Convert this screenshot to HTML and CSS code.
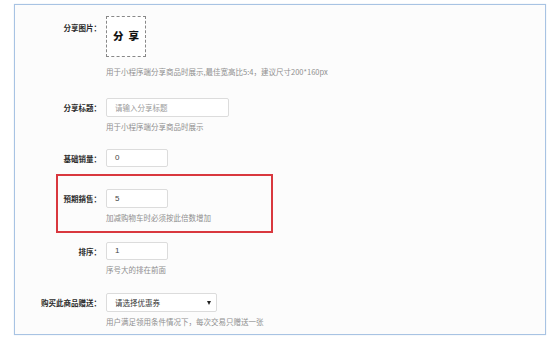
FILE: index.html
```html
<!DOCTYPE html>
<html lang="zh">
<head>
<meta charset="utf-8">
<link rel="stylesheet" href="styles.css">
</head>
<body>
<div class="frame">
  <div class="row r-img">
    <div class="label">分享图片：</div>
    <div class="field">
      <div class="imgbox"><span>分享</span></div>
      <div class="hint">用于小程序端分享商品时展示,最佳宽高比5:4，建议尺寸200*160px</div>
    </div>
  </div>
  <div class="row r-title">
    <div class="label">分享标题：</div>
    <div class="field">
      <div class="input wide placeholder">请输入分享标题</div>
      <div class="hint">用于小程序端分享商品时展示</div>
    </div>
  </div>
  <div class="row r-base">
    <div class="label">基础销量：</div>
    <div class="field">
      <div class="input">0</div>
    </div>
  </div>
  <div class="row highlight">
    <div class="label">預期銷售：</div>
    <div class="field">
      <div class="input">5</div>
      <div class="hint">加减购物车时必须按此倍数增加</div>
    </div>
  </div>
  <div class="row r-sort">
    <div class="label">排序：</div>
    <div class="field">
      <div class="input">1</div>
      <div class="hint">序号大的排在前面</div>
    </div>
  </div>
  <div class="row r-gift">
    <div class="label">购买此商品赠送：</div>
    <div class="field">
      <div class="input select"><span>请选择优惠券</span><span class="arrow"></span></div>
      <div class="hint">用户满足领用条件情况下，每次交易只赠送一张</div>
    </div>
  </div>
</div>
</body>
</html>
```
FILE: styles.css
```css
html, body {
  margin: 0;
  padding: 0;
  background: #ffffff;
}
body {
  width: 550px;
  height: 338px;
  padding: 4px 4px 3px 14px;
  box-sizing: border-box;
  font-family: "Noto Sans CJK SC", "Liberation Sans", sans-serif;
}
.frame {
  height: 331px;
  box-sizing: border-box;
  border: 1.5px solid #a8c3e3;
  background: #fcfcfc;
  padding-top: 11px;
  box-shadow: 0 0 1px #c8d8ec;
}
.row {
  display: flex;
  align-items: flex-start;
  gap: 5px;
}
.label {
  flex: 0 0 86px;
  text-align: right;
  font-family: "Noto Sans CJK TC", "Noto Sans CJK SC", sans-serif;
  font-size: 7.5px;
  font-weight: 700;
  color: #2a2a2a;
  line-height: 19px;
  white-space: nowrap;
}
.field {
  display: flex;
  flex-direction: column;
  align-items: flex-start;
}
.hint {
  font-size: 7.5px;
  color: #8f8f8f;
  line-height: 12px;
  margin-top: 4px;
  white-space: nowrap;
}
.input {
  box-sizing: border-box;
  width: 62px;
  height: 19px;
  border: 1px solid #dcdcdc;
  border-radius: 2px;
  background: #fff;
  font-family: "Liberation Sans", "Noto Sans CJK SC", sans-serif;
  font-size: 8px;
  color: #444;
  line-height: 17px;
  padding-left: 8px;
}
.input.wide {
  width: 123px;
}
.placeholder {
  font-family: "Noto Sans CJK SC", sans-serif;
  color: #9a9a9a;
  font-size: 7.5px;
}
.select {
  width: 111px;
  display: flex;
  justify-content: space-between;
  align-items: center;
  font-family: "Noto Sans CJK SC", sans-serif;
  font-size: 7.5px;
  color: #333;
  padding-right: 5px;
}
.arrow {
  width: 0;
  height: 0;
  border-left: 2.5px solid transparent;
  border-right: 2.5px solid transparent;
  border-top: 4px solid #222;
}
.imgbox {
  box-sizing: border-box;
  width: 40px;
  height: 41px;
  border: 1px dashed #888;
  display: flex;
  align-items: center;
  justify-content: center;
  background: #fff;
}
.imgbox span {
  font-size: 10.5px;
  font-weight: 900;
  color: #111;
  letter-spacing: 5px;
  margin-left: 5px;
  line-height: 1;
  white-space: nowrap;
}
.r-img .label {
  line-height: 24px;
}
.r-img .hint {
  margin-top: 9px;
}
.r-img { margin-bottom: 20px; }
.r-title { margin-bottom: 16px; }
.r-base { margin-bottom: 6px; }
.r-base .input { height: 18px; line-height: 16px; }
.highlight {
  margin-left: 41px;
  width: 217px;
  box-sizing: border-box;
  border: 2px solid #d9383f;
  padding: 13px 0 7px 0;
  margin-bottom: 9px;
}
.highlight .label {
  flex: 0 0 43px;
}
.r-sort { margin-bottom: 17px; }
.r-sort .input { height: 18px; line-height: 16px; }
```
